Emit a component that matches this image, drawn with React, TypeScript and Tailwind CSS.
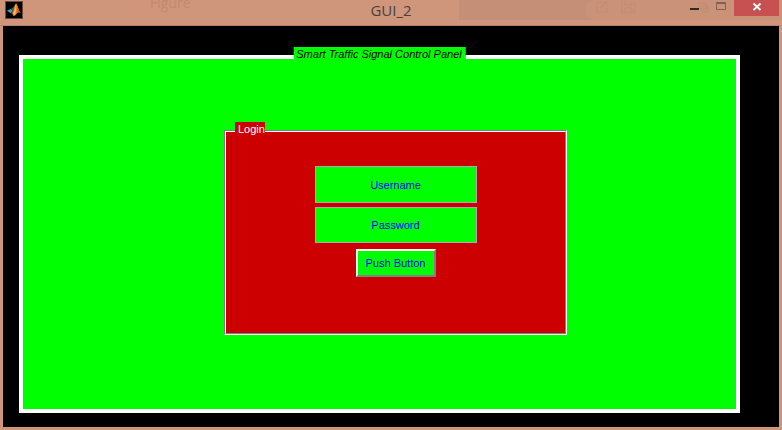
import React from "react";

function AppIcon() {
  return (
    <svg viewBox="0 0 16 16" className="h-4 w-4 bg-black outline outline-[#6b4a3e]" aria-hidden="true">
      <defs>
        <linearGradient id="peak" x1="0" x2="1" y1="0" y2="0">
          <stop offset="0" stopColor="#7a2a14" />
          <stop offset="0.45" stopColor="#f59a2c" />
          <stop offset="0.65" stopColor="#e8641c" />
          <stop offset="1" stopColor="#a32a10" />
        </linearGradient>
      </defs>
      <path d="M0.8 8.7 L4.6 6.9 L7 8.8 L4.6 11.2 L3.4 10.2 Z" fill="#3f9dc0" />
      <path d="M4.6 6.9 L6.6 5.8 C8 4.6 8.8 2.4 10 1.4 L8.6 7.4 L7 8.8 Z" fill="#2c6470" />
      <path d="M10 1.2 C11.4 2 12.6 7.6 15.2 11.6 C13.2 10.2 12.2 10.2 11 11.2 C9.8 12.4 8.8 14 7.4 14.2 C7 12.4 6.2 11.6 4.6 11.2 C7.8 9.6 8.6 3 10 1.2 Z" fill="url(#peak)" />
      <path d="M10 3 C10.6 5.4 10.4 9.4 8.2 13.4 C7.6 12.2 7.4 11.8 6.8 11.2 C8.8 9.4 9.6 5.4 10 3 Z" fill="#ffc04a" />
    </svg>
  );
}

function BackdropHints() {
  return (
    <div className="pointer-events-none absolute inset-0 overflow-hidden" aria-hidden="true">
      <div className="absolute top-0 right-0 left-[459px] h-5 bg-[#c58f77]" />
      <div className="absolute top-0 right-0 left-[586px] h-5 rounded-l-lg bg-[#cb927a]" />
      <span className="absolute -top-[7px] left-[150px] font-['Open_Sans',sans-serif] text-sm leading-5 text-[#c38970]">Figure</span>
      <svg className="absolute top-0 left-[590px] h-4 w-[120px] fill-none stroke-[#c38b73]" viewBox="0 0 120 16">
        <path d="M12 2H7v10h10V8M10 8l7-6M13 2h4v4" />
        <path d="M32 1v12h13V1M35 1v4h7V1M35 13V8h7v5" />
        <path d="M109 3h7v6h-7zM112 6h6v6h-6z" />
      </svg>
    </div>
  );
}

function TitleBar() {
  return (
    <header className="relative h-[26px] border-b border-[#b98168] bg-[#cf967b]">
      <BackdropHints />
      <div className="relative grid h-full grid-cols-3">
        <div className="flex items-start pt-[2px] pl-[6px]">
          <AppIcon />
        </div>
        <h1 className="text-center font-['Open_Sans',sans-serif] text-[15px] leading-5 text-[#4a3f3b]">GUI_2</h1>
        <div className="flex items-start justify-end pr-[3px]">
          <button type="button" aria-label="Minimize" className="flex h-4 w-[26px] items-center justify-center">
            <svg className="h-4 w-4" viewBox="0 0 16 16">
              <path d="M3 8h9v2H3z" fill="#332722" />
            </svg>
          </button>
          <button type="button" aria-label="Maximize" className="flex h-4 w-[26px] items-center justify-center">
            <svg className="h-4 w-4" viewBox="0 0 16 16">
              <path d="M3.5 3.5h9v6h-9zM3 2.5h10" fill="none" stroke="#806050" />
            </svg>
          </button>
          <button type="button" aria-label="Close" className="flex h-4 w-[45px] items-center justify-center bg-[#c75050]">
            <svg className="h-4 w-4" viewBox="0 0 16 16">
              <path d="M5.5 3.5l7 6.5M12.5 3.5l-7 6.5" stroke="#ffffff" strokeWidth="1.8" />
            </svg>
          </button>
        </div>
      </div>
    </header>
  );
}

const fieldStyle =
  "w-[162px] border border-[#a9a9a9] bg-[#00ff00] text-center text-[11px] text-[#0000ff] outline-none placeholder:text-[#0000ff] placeholder:opacity-100";

function LoginPanel() {
  return (
    <section
      aria-labelledby="login-title"
      className="relative h-[205px] w-[343px] border border-t-[#808080] border-r-white border-b-white border-l-[#808080]"
    >
      <h3 id="login-title" className="absolute -top-[9px] left-[10px] bg-[#cc0000] pl-[3px] text-[11px] leading-[14px] text-white">
        Login
      </h3>
      <form
        onSubmit={(event: React.FormEvent) => event.preventDefault()}
        className="flex h-full flex-col items-center border border-t-white border-r-[#808080] border-b-[#808080] border-l-white bg-[#cc0000] pt-[34px]"
      >
        <input type="text" aria-label="Username" placeholder="Username" className={`${fieldStyle} h-[37px]`} />
        <input type="password" aria-label="Password" placeholder="Password" className={`${fieldStyle} mt-1 h-9`} />
        <button
          type="submit"
          className="mt-[6px] h-7 w-20 border-2 border-t-white border-r-[#808080] border-b-[#808080] border-l-white bg-[#00ff00] text-[11px] text-[#0000ff]"
        >
          Push Button
        </button>
      </form>
    </section>
  );
}

export default function App() {
  return (
    <div className="flex min-h-screen flex-col bg-[#cf967b] font-['Liberation_Sans',Arial,sans-serif]">
      <TitleBar />
      <main className="mx-[3px] mb-[3px] flex flex-1 bg-black pt-[29px] pr-[39px] pb-[14px] pl-4">
        <section aria-labelledby="panel-title" className="relative flex flex-1 justify-center border-4 border-white bg-[#00ff00] pt-[71px] pb-4 pl-8">
          <h2
            id="panel-title"
            className="absolute -top-3 left-1/2 -translate-x-1/2 bg-[#00ff00] pr-1 pl-[3px] text-[11px] leading-[14px] whitespace-nowrap text-black italic"
          >
            Smart Traffic Signal Control Panel
          </h2>
          <LoginPanel />
        </section>
      </main>
    </div>
  );
}
